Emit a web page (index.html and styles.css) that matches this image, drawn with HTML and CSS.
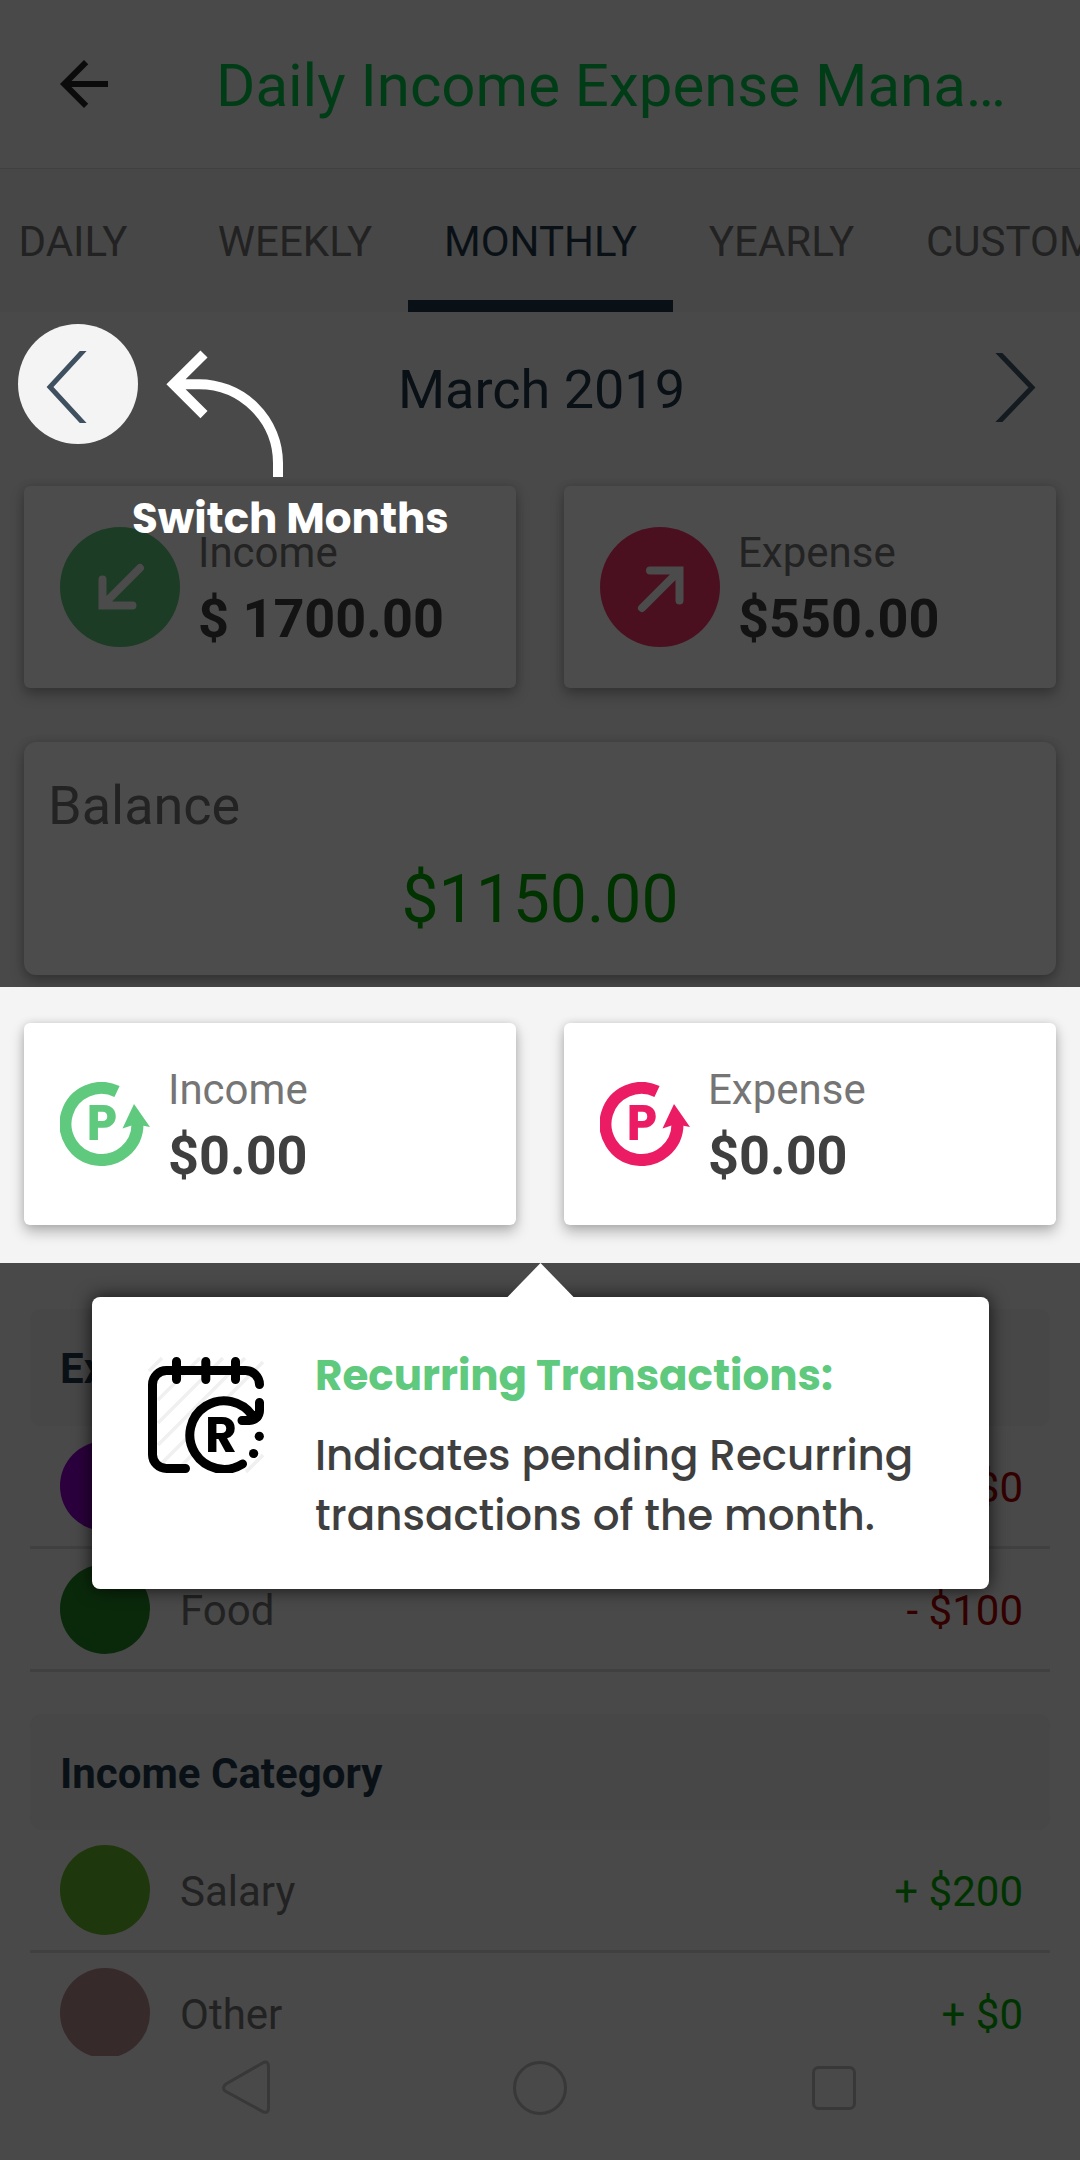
FILE: index.html
```html
<!DOCTYPE html>
<html lang="en">
<head>
<meta charset="utf-8">
<title>Daily Income Expense Manager</title>
<link rel="stylesheet" href="styles.css">
</head>
<body>
<div class="screen">
  <header class="appbar">
    <svg class="back" viewBox="0 0 24 24"><path d="M20 11H7.83l5.59-5.59L12 4l-8 8 8 8 1.41-1.41L7.83 13H20v-2z"/></svg>
    <h1 class="title">Daily Income Expense Mana…</h1>
  </header>

  <nav class="tabs">
    <span class="tab tab-daily">DAILY</span>
    <span class="tab tab-weekly">WEEKLY</span>
    <span class="tab tab-monthly active">MONTHLY</span>
    <span class="tab tab-yearly">YEARLY</span>
    <span class="tab tab-custom">CUSTOM</span>
  </nav>

  <main class="content">
    <div class="month">
      <span class="month-btn spotlight">
        <svg viewBox="0 0 120 120"><path d="M67.500 24.500 L32 63 L67.500 101.500"/></svg>
      </span>
      <span class="month-name">March 2019</span>
      <span class="month-btn next">
        <svg viewBox="0 0 120 120"><path d="M54 26 L90 63.500 L54 101"/></svg>
      </span>
    </div>

    <div class="cards">
      <div class="card">
        <svg class="badge" viewBox="0 0 120 120">
          <circle class="badge-income" cx="60" cy="60" r="60"/>
          <path class="badge-arrow" d="M80 41 L43 78 M42.500 52.500 V78.500 H72.500"/>
        </svg>
        <div class="figures"><span class="label">Income</span><span class="amount">$ 1700.00</span></div>
      </div>
      <div class="card">
        <svg class="badge" viewBox="0 0 120 120">
          <circle class="badge-expense" cx="60" cy="60" r="60"/>
          <path class="badge-arrow" d="M42 81 L79 44 M50 43.500 H79.500 V73.500"/>
        </svg>
        <div class="figures"><span class="label">Expense</span><span class="amount">$550.00</span></div>
      </div>
    </div>

    <div class="card balance">
      <span class="balance-label">Balance</span>
      <span class="balance-value">$1150.00</span>
    </div>

    <div class="cards pending">
      <div class="card">
        <svg class="recur green" viewBox="0 0 90 84">
          <path class="ring" d="M57 9.500 A36 36 0 1 0 77.500 42"/>
          <path class="head" d="M74 22 L90 45 L82 43.500 L71.500 43.500 L62.500 46.500 Z"/>
          <text x="26.500" y="58">P</text>
        </svg>
        <div class="figures"><span class="label">Income</span><span class="amount">$0.00</span></div>
      </div>
      <div class="card">
        <svg class="recur pink" viewBox="0 0 90 84">
          <path class="ring" d="M57 9.500 A36 36 0 1 0 77.500 42"/>
          <path class="head" d="M74 22 L90 45 L82 43.500 L71.500 43.500 L62.500 46.500 Z"/>
          <text x="26.500" y="58">P</text>
        </svg>
        <div class="figures"><span class="label">Expense</span><span class="amount">$0.00</span></div>
      </div>
    </div>

    <section class="category">
      <h2 class="category-head">Expense Category</h2>
      <div class="row"><i class="dot purple"></i><span class="name"></span><span class="value minus">- $0</span></div>
      <div class="row"><i class="dot dark-green"></i><span class="name">Food</span><span class="value minus">- $100</span></div>
    </section>
    <section class="category income">
      <h2 class="category-head">Income Category</h2>
      <div class="row"><i class="dot lime"></i><span class="name">Salary</span><span class="value plus">+ $200</span></div>
      <div class="row"><i class="dot rose"></i><span class="name">Other</span><span class="value plus">+ $0</span></div>
    </section>
  </main>

  <footer class="navbar">
    <svg viewBox="0 0 60 60"><path d="M47.500 4.500 L10 26 Q5 30 10 33.500 L47.500 54 Q52.500 55.500 52.500 50 V9 Q52.500 2.500 47.500 4.500 Z"/></svg>
    <svg viewBox="0 0 60 60"><circle cx="30" cy="30" r="25.500"/></svg>
    <svg viewBox="0 0 60 60"><rect x="9.500" y="9.500" width="41" height="41" rx="5"/></svg>
  </footer>

  <div class="hint">
    <svg class="hint-arrow" viewBox="0 0 120 130"><path d="M39 4 L8.500 34.300 L39 64.600 M11 34.300 H33 A79 79 0 0 1 113 113 V127"/></svg>
    <span class="hint-text">Switch Months</span>
  </div>

  <aside class="tip">
    <svg class="tip-icon" viewBox="0 0 116 116">
      <path class="hatch" d="M1 14 L14 1 M10 43 L52 1 M10 66 L75 1 M10 88 L97 1 M12 108 L115 5 M34 108 L70 72 M98 115 L115 98 M103 66 L115 54"/>
      <path class="mask" d="M43 77.300 a34.300 34.300 0 1 1 68.600 0 a34.300 34.300 0 1 1 -68.600 0"/>
      <path class="line" d="M111.500 27.500 A14 14 0 0 0 97.500 13.500 H18.500 A14 14 0 0 0 4.500 27.500 V97.500 A14 14 0 0 0 18.500 111.500 H37.500 M28.500 4.500 V22.500 M57.800 4.500 V22.500 M87.500 4.500 V22.500 M111.500 45.500 V53.500 A10 10 0 0 1 101.500 63.500 H94 M105 59.500 A34.300 34.300 0 1 0 94.500 107"/>
      <path class="line" d="M104 58 L109 60"/>
      <circle cx="111.300" cy="79.300" r="4.600"/>
      <circle cx="105.600" cy="96.500" r="4.600"/>
      <text x="57" y="95">R</text>
    </svg>
    <div class="tip-body">
      <strong class="tip-title">Recurring Transactions:</strong>
      <p class="tip-text">Indicates pending Recurring<br>transactions of the month.</p>
    </div>
  </aside>
</div>
</body>
</html>
```
FILE: styles.css
```css
* { box-sizing: border-box; }

body {
  margin: 0;
  font-family: Roboto, "Liberation Sans", sans-serif;
  background: #494949;
}

svg { display: block; flex: none; }

.screen {
  position: relative;
  display: flex;
  flex-direction: column;
  width: 1080px;
  height: 2160px;
  overflow: hidden;
  background: #494949;
}

/* App bar */
.appbar {
  display: flex;
  align-items: center;
  gap: 96px;
  flex: none;
  height: 169px;
  padding-left: 48px;
  border-bottom: 1px solid #404040;
}
.back { width: 72px; height: 72px; fill: #0b0b0b; }
.title {
  margin: 4px 0 0;
  font-size: 60px;
  font-weight: 400;
  line-height: 80px;
  color: #003d17;
  white-space: nowrap;
}

/* Tabs */
.tabs {
  display: flex;
  flex: none;
  height: 143px;
  margin-left: -36px;
  background: #474747;
}
.tab {
  display: flex;
  flex: none;
  align-items: center;
  justify-content: center;
  padding-top: 13px;
  border-bottom: 12px solid transparent;
  font-size: 42px;
  color: #222;
}
.tab-daily { width: 218px; }
.tab-weekly { width: 226px; }
.tab-monthly { width: 265px; }
.tab-yearly { width: 217px; }
.tab-custom { justify-content: flex-start; padding-left: 36px; }
.tab.active { color: #0a1116; border-color: #0a1116; }

.content {
  flex: 1;
  min-height: 0;
  overflow: hidden;
}

/* Month switcher */
.month {
  display: grid;
  grid-template-columns: 120px 1fr 120px;
  height: 174px;
  padding: 12px 18px 0;
}
.month-btn { width: 120px; height: 120px; border-radius: 50%; }
.month-btn svg {
  width: 120px;
  height: 120px;
  fill: none;
  stroke: #131a20;
  stroke-width: 5;
  clip-path: inset(27px 20px 21px 20px);
}
.month-btn.next svg { clip-path: inset(29px 20px 22px 20px); }
.spotlight { background: #f4f4f4; }
.month-btn.spotlight svg { stroke: #3f5060; }
.month-name {
  padding: 6px 0 0 3px;
  font-size: 54px;
  line-height: 120px;
  height: 120px;
  text-align: center;
  color: #0a1116;
}

/* Summary cards */
.cards { display: flex; gap: 48px; padding: 0 24px; }
.card {
  display: flex;
  flex: 1;
  align-items: center;
  gap: 18px;
  height: 202px;
  padding: 0 36px;
  border-radius: 6px;
  background: #4c4c4c;
  box-shadow: 0 7px 14px rgba(0, 0, 0, .26), 0 0 8px rgba(0, 0, 0, .12);
}
.badge { width: 120px; height: 120px; }
.badge-income { fill: #1d3c25; }
.badge-expense { fill: #4a1020; }
.badge-arrow {
  fill: none;
  stroke: #4b4b4b;
  stroke-width: 8;
  stroke-linecap: round;
}
.figures { display: flex; flex-direction: column; gap: 2px; padding-top: 6px; }
.label { font-size: 42px; line-height: 56px; color: #232323; }
.amount { font-size: 54px; line-height: 72px; font-weight: 700; color: #131313; }

.balance {
  flex-direction: column;
  align-items: stretch;
  gap: 14px;
  height: 233px;
  margin: 54px 24px 12px;
  padding: 28px 24px 0;
  border-radius: 12px;
}
.balance-label { font-size: 54px; line-height: 72px; color: #232323; }
.balance-value { font-size: 66px; line-height: 88px; text-align: center; color: #030; }

/* Highlighted pending row */
.pending {
  position: relative;
  height: 276px;
  padding-top: 36px;
  background: #f4f4f4;
}
.pending .card { background: #fff; }
.pending .label { color: #757575; }
.pending .amount { color: #3f3f3f; }
.recur { width: 90px; height: 84px; }
.recur .ring { fill: none; stroke-width: 12; }
.recur text { font-family: Poppins, Inter, sans-serif; font-size: 49px; font-weight: 700; }
.green { fill: #5fc97e; stroke: none; }
.green .ring { stroke: #5fc97e; }
.pink { fill: #ec1c64; stroke: none; }
.pink .ring { stroke: #ec1c64; }

/* Category lists */
.category { margin: 46px 30px 0; }
.category.income { margin-top: 42px; }
.category-head {
  margin: 0;
  height: 117px;
  padding: 1px 0 0 30px;
  border-radius: 12px;
  background: #474747;
  font-size: 42px;
  line-height: 117px;
  color: #0a1116;
}
.income .category-head { height: 116px; line-height: 116px; padding-top: 2px; }
.row {
  display: flex;
  align-items: center;
  height: 123px;
  padding: 0 27px 0 30px;
  border-bottom: 3px solid #404040;
  font-size: 42px;
}
.dot { width: 90px; height: 90px; margin-right: 30px; border-radius: 50%; }
.purple { background: #2b003d; }
.dark-green { background: #0a290b; }
.lime { background: #1f370c; }
.rose { background: #372a2a; }
.name { flex: 1; padding-top: 3px; color: #222; }
.value { padding-top: 3px; }
.minus { color: #300; }
.plus { color: #030; }

/* System navigation */
.navbar {
  position: relative;
  display: flex;
  flex: none;
  justify-content: center;
  gap: 234px;
  height: 104px;
  padding-top: 2px;
  background: #494949;
}
.navbar svg {
  width: 60px;
  height: 60px;
  fill: none;
  stroke: #383838;
  stroke-width: 3;
}

/* Coach marks */
.hint {
  position: absolute;
  left: 132px;
  top: 350px;
  width: 330px;
}
.hint-arrow {
  width: 120px;
  height: 130px;
  margin-left: 33px;
  fill: none;
  stroke: #fff;
  stroke-width: 10;
}
.hint-text {
  display: block;
  margin-top: 9px;
  font: 700 42px/60px Poppins, Inter, sans-serif;
  color: #fff;
  white-space: nowrap;
}
.tip {
  position: absolute;
  left: 92px;
  top: 1297px;
  display: flex;
  gap: 51px;
  width: 897px;
  height: 292px;
  padding: 60px 0 0 56px;
  border-radius: 8px;
  background: #fff;
  box-shadow: 0 0 18px rgba(0, 0, 0, .75);
}
.tip::before {
  content: "";
  position: absolute;
  left: 414.5px;
  top: -34px;
  width: 68px;
  height: 35px;
  background: #fff;
  clip-path: polygon(50% 0, 100% 100%, 0 100%);
}
.tip-icon { width: 116px; height: 116px; }
.tip-icon .hatch { fill: none; stroke: #f0f0f0; stroke-width: 3.5; }
.tip-icon .mask { fill: #fff; }
.tip-icon .line { fill: none; stroke: #000; stroke-width: 9; stroke-linecap: round; }
.tip-icon text { font: 700 49px Poppins, Inter, sans-serif; }
.tip-body { margin-top: -11px; font-family: Poppins, Inter, sans-serif; white-space: nowrap; }
.tip-title {
  display: block;
  font-size: 42px;
  line-height: 60px;
  color: #5fc97e;
}
.tip-text {
  margin: 20px 0 0;
  font-size: 42px;
  font-weight: 500;
  line-height: 60px;
  color: #3f3f3f;
}
```
